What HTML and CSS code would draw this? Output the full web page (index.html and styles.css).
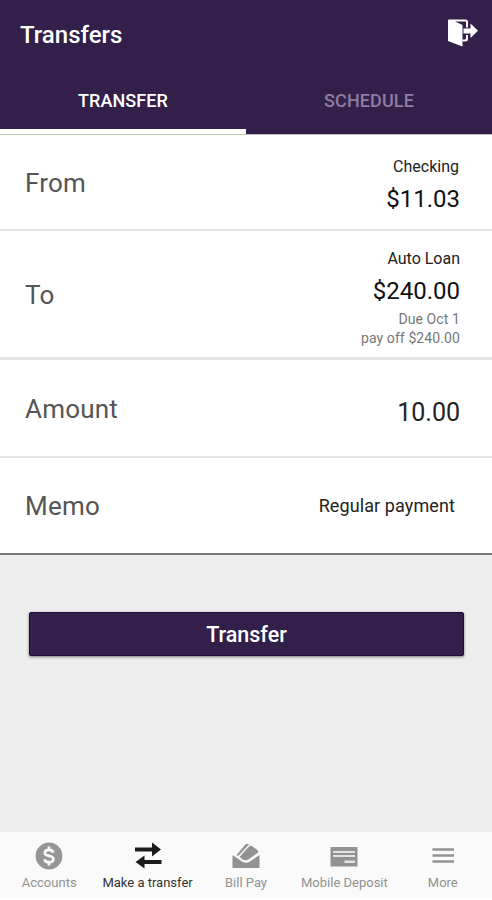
FILE: index.html
```
<!DOCTYPE html>
<html lang="en">
<head>
    <meta charset="UTF-8">
    <meta name="viewport" content="width=device-width, initial-scale=1.0">
    <title>Transfers</title>
    <link rel="stylesheet" href="styles.css">
</head>
<body>
    <header>
        <div class="title-bar">
            <h1>Transfers</h1>
            <svg class="logout" width="32" height="30" viewBox="0 0 32 30">
                <path d="M2 1.5H18.5Q21 1.5 21 4V9.5H19V3.5H8L15.5 7V28.5L1 23V2.5Q1 1.5 2 1.5Z" fill="#fff"/>
                <path d="M15.5 21.5H17.5Q19 21.5 19 20V17H21V21Q21 23.5 18 23.5H15.5Z" fill="#fff"/>
                <path d="M16.5 10.5H23.5V5.5L31 12.8L23.5 20V15.5H16.5Z" fill="#fff"/>
            </svg>
        </div>
        <nav class="tabs">
            <a class="tab active">TRANSFER</a>
            <a class="tab">SCHEDULE</a>
        </nav>
    </header>

    <main>
        <div class="form">
            <div class="row from">
                <span class="label">From</span>
                <div class="value">
                    <div class="account nudge">Checking</div>
                    <div class="amount">$11.03</div>
                </div>
            </div>
            <div class="row to">
                <span class="label">To</span>
                <div class="value">
                    <div class="account">Auto Loan</div>
                    <div class="amount">$240.00</div>
                    <div class="detail">Due Oct 1</div>
                    <div class="detail">pay off $240.00</div>
                </div>
            </div>
            <div class="row sum">
                <span class="label">Amount</span>
                <div class="value entered">10.00</div>
            </div>
            <div class="row memo">
                <span class="label">Memo</span>
                <div class="value note">Regular payment</div>
            </div>
        </div>
        <button class="transfer-button">Transfer</button>
    </main>

    <nav class="bottom-nav">
        <a class="item">
            <svg width="28" height="28" viewBox="0 0 28 28">
                <circle cx="14" cy="14" r="13.4" fill="#969696"/>
                <path d="M18.3 10.6C17.9 8.7 16.3 7.8 14 7.8C11.5 7.8 9.8 9 9.8 10.9C9.8 15 18.4 12.7 18.4 17C18.4 19 16.6 20.2 14 20.2C11.5 20.2 9.8 19.1 9.5 17.2M14 4.6V8M14 20V23.4" fill="none" stroke="#fafafa" stroke-width="2.7"/>
            </svg>
            <span>Accounts</span>
        </a>
        <a class="item current">
            <svg width="28" height="28" viewBox="0 0 28 28">
                <path d="M1 5.5H18V.5L27 7.5L18 14.5V9.5H1Z" fill="#1c1c1c"/>
                <path d="M27.5 18H10.5V13.5L1.5 20L10.5 26.5V22H27.5Z" fill="#1c1c1c"/>
            </svg>
            <span>Make a transfer</span>
        </a>
        <a class="item">
            <svg width="28" height="28" viewBox="0 0 28 28">
                <path d="M.5 13L10 19.5Q14 22 18 19.5L27.5 13V26H.5Z" fill="#929292"/>
                <path d="M7.2 14.8L16.5 4.5Q18.5 2.5 20.5 4L26 8Q27.5 9.5 26 11L18.5 16.5Q13.5 20.5 10 17.5Z" fill="#929292" stroke="#fafafa" stroke-width="1"/>
                <path d="M4.5 13L13 3Q15 1 17 2.5L6.2 14Z" fill="#929292"/>
            </svg>
            <span>Bill Pay</span>
        </a>
        <a class="item">
            <svg width="28" height="28" viewBox="0 0 28 28">
                <path d="M.5 5H27.5V24.5H.5Z" fill="#929292"/>
                <path d="M3 9H25V11H3ZM3 13H25V15H3ZM14.5 18.5H25V21H14.5Z" fill="#e4e4e4"/>
            </svg>
            <span>Mobile Deposit</span>
        </a>
        <a class="item">
            <svg width="28" height="28" viewBox="0 0 28 28">
                <path d="M3.5 7.5H25M3.5 13.5H25M3.5 19.5H25" stroke="#929292" stroke-width="2.4"/>
            </svg>
            <span>More</span>
        </a>
    </nav>
</body>
</html>
```

FILE: styles.css
```
* {
    box-sizing: border-box;
}

body {
    font-family: Roboto, Arial, sans-serif;
    background-color: #ededed;
    margin: 0;
    height: 900px;
    display: flex;
    flex-direction: column;
    overflow: hidden;
}

header {
    background-color: #33204a;
    color: #fff;
    height: 134px;
}

.title-bar {
    display: flex;
    justify-content: space-between;
    align-items: center;
    height: 69px;
    padding: 0 13px 0 20px;
}

h1 {
    font-size: 24px;
    font-weight: 500;
    margin: 0;
}

.logout {
    margin-bottom: 4px;
}

.tabs {
    display: flex;
    height: 65px;
}

.tab {
    flex: 1;
    text-align: center;
    font-size: 18px;
    font-weight: 500;
    line-height: 64px;
    letter-spacing: 0.1px;
    color: #8f7ca0;
}

.tab.active {
    color: #fff;
    border-bottom: 5px solid #fff;
}

main {
    flex: 1;
}

.form {
    background-color: #fff;
    border-top: 1px solid #bbb;
    border-bottom: 2px solid #777;
}

.row {
    display: flex;
    justify-content: space-between;
    align-items: center;
    padding: 2px 32px 0 25px;
    border-bottom: 2px solid #e3e3e3;
}

.from {
    height: 96px;
}

.to {
    height: 129px;
    border-bottom-width: 3px;
}

.sum {
    height: 98px;
}

.memo {
    height: 95px;
    padding-top: 0;
    border-bottom: none;
}

.label {
    font-size: 26px;
    color: #555;
    letter-spacing: 0.2px;
}

.value {
    text-align: right;
    color: #222;
}

.account {
    font-size: 16px;
    line-height: 32px;
}

.nudge {
    padding-right: 1px;
}

.amount {
    font-size: 24px;
    line-height: 32px;
    color: #111;
}

.to .amount {
    padding-bottom: 3px;
}

.to .value {
    margin-top: 1px;
}

.detail {
    font-size: 14px;
    line-height: 19px;
    letter-spacing: 0.1px;
    color: #777;
}

.entered {
    font-size: 25px;
    padding-top: 6px;
}

.note {
    font-size: 18px;
    padding-right: 5px;
    letter-spacing: 0.1px;
}

.transfer-button {
    display: block;
    width: 435px;
    height: 44px;
    margin: 57px 0 0 29px;
    padding: 0;
    background-color: #33204a;
    color: #fff;
    border: 1px solid #1d0b3c;
    border-radius: 2px;
    box-shadow: 0 1px 3px rgba(0, 0, 0, 0.5);
    font-family: inherit;
    font-size: 21.5px;
    font-weight: 500;
}

.bottom-nav {
    display: grid;
    grid-template-columns: repeat(5, 1fr);
    height: 68px;
    background-color: #fafafa;
    border-bottom: 2px solid #fff;
}

.item {
    display: flex;
    flex-direction: column;
    align-items: center;
    padding-top: 10px;
    font-size: 13px;
    line-height: 16px;
    color: #929292;
    white-space: nowrap;
}

.item span {
    margin-top: 5px;
}

.current {
    color: #333;
}
```
